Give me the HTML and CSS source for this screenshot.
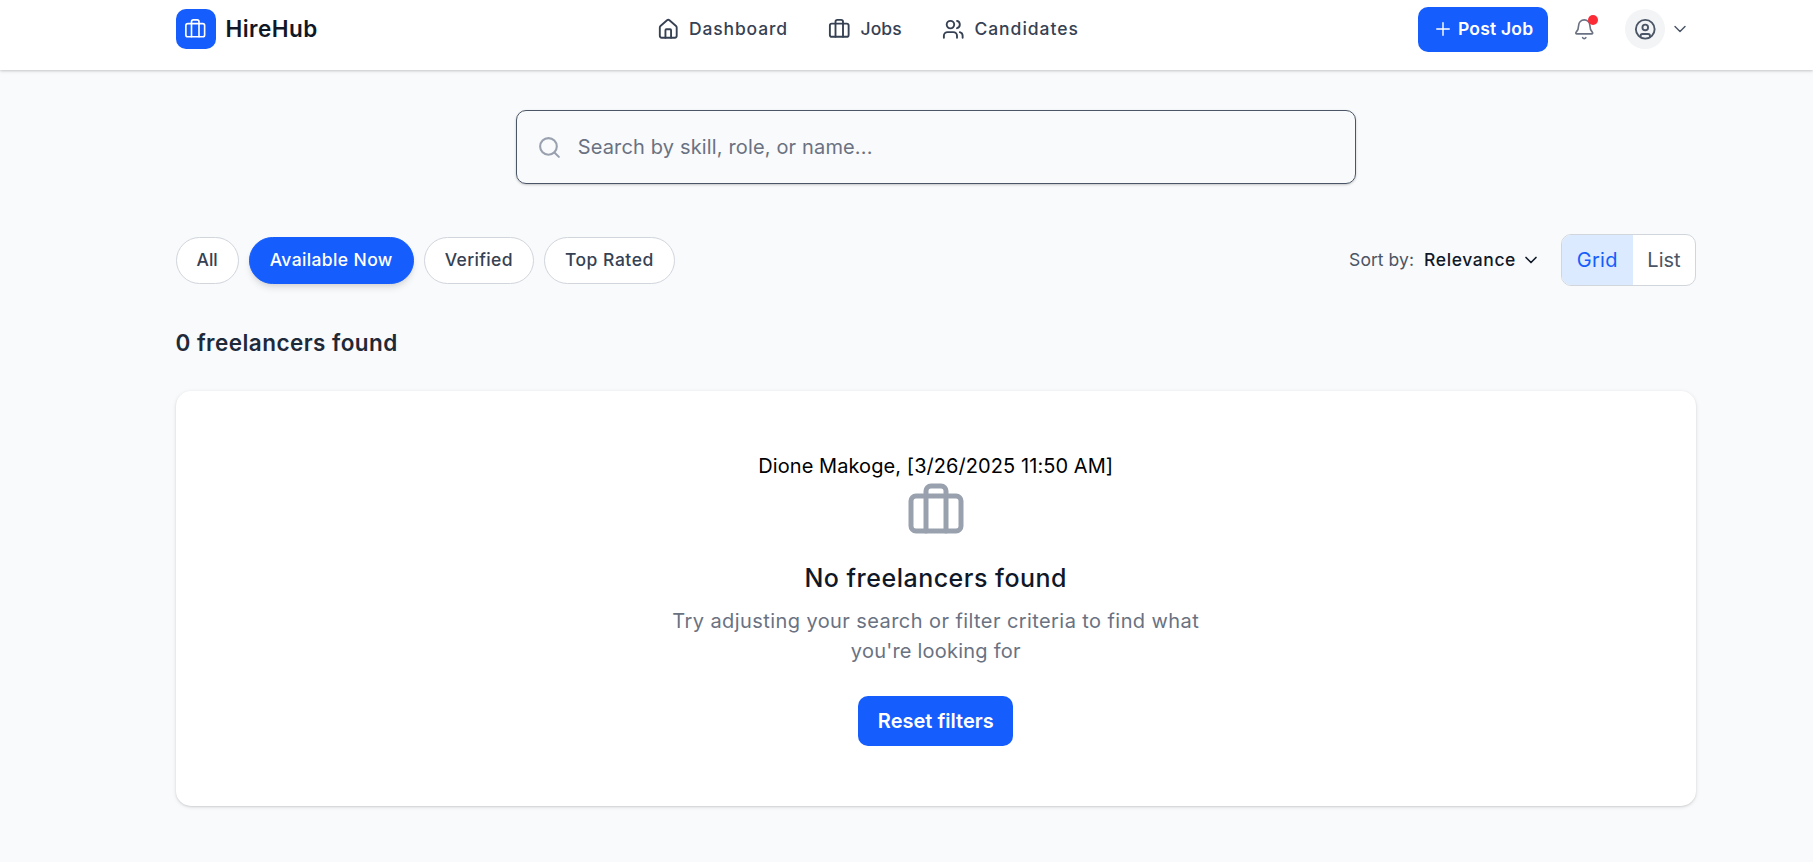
FILE: index.html
```
<!DOCTYPE html>
<html lang="en"><head><meta charset="utf-8"><title>HireHub</title><link rel="stylesheet" href="styles.css"></head>
<body>
<svg width="0" height="0" class="defs"><symbol id="briefcase" viewBox="0 0 24 24"><path d="M16 20V4a2 2 0 0 0-2-2h-4a2 2 0 0 0-2 2v16"/><rect x="2" y="6" width="20" height="14" rx="2"/></symbol><symbol id="chevron" viewBox="0 0 24 24"><path d="m6 9 6 6 6-6"/></symbol></svg>
<header class="header"><div class="bar">
<div class="brand"><span class="logo"><svg class="icon"><use href="#briefcase"/></svg></span><span class="brand-name t">HireHub</span></div>
<nav class="nav">
<a class="nav-item"><svg class="icon" viewBox="0 0 24 24"><path d="M15 21v-8a1 1 0 0 0-1-1h-4a1 1 0 0 0-1 1v8"/><path d="M3 10a2 2 0 0 1 .709-1.528l7-5.999a2 2 0 0 1 2.582 0l7 5.999A2 2 0 0 1 21 10v9a2 2 0 0 1-2 2H5a2 2 0 0 1-2-2z"/></svg><span class="t w-dashboard">Dashboard</span></a>
<a class="nav-item"><svg class="icon"><use href="#briefcase"/></svg><span class="t w-jobs">Jobs</span></a>
<a class="nav-item"><svg class="icon" viewBox="0 0 24 24"><path d="M16 21v-2a4 4 0 0 0-4-4H6a4 4 0 0 0-4 4v2"/><circle cx="9" cy="7" r="4"/><path d="M22 21v-2a4 4 0 0 0-3-3.87M16 3.13a4 4 0 0 1 0 7.75"/></svg><span class="t w-candidates">Candidates</span></a>
</nav>
<div class="actions">
<button class="post"><svg class="icon small thin" viewBox="0 0 24 24"><path d="M4.5 12h15M12 4.5v15"/></svg><span class="t w-post">Post Job</span></button>
<span class="bell"><svg class="icon" viewBox="0 0 24 24"><path d="M10.268 21a2 2 0 0 0 3.464 0"/><path d="M3.262 15.326A1 1 0 0 0 4 17h16a1 1 0 0 0 .74-1.673C19.41 13.956 18 12.499 18 8A6 6 0 0 0 6 8c0 4.499-1.411 5.956-2.738 7.326"/></svg><i class="dot"></i></span>
<span class="avatar"><svg class="icon" viewBox="0 0 24 24"><circle cx="12" cy="12" r="10"/><circle cx="12" cy="10" r="3"/><path d="M7 20.662V19a2 2 0 0 1 2-2h6a2 2 0 0 1 2 2v1.662"/></svg></span>
<svg class="icon small thin menu-chevron"><use href="#chevron"/></svg>
</div></div></header>
<main class="main">
<div class="search"><svg class="icon search-icon" viewBox="0 0 24 24"><circle cx="11" cy="11" r="8"/><path d="m21 21-4.3-4.3"/></svg><span class="t w-search">Search by skill, role, or name...</span></div>
<div class="toolbar">
<div class="filters"><button class="pill"><span class="t w-all">All</span></button><button class="pill active"><span class="t w-available">Available Now</span></button><button class="pill"><span class="t w-verified">Verified</span></button><button class="pill"><span class="t w-top">Top Rated</span></button></div>
<div class="view"><span class="sort-label t">Sort by:</span><span class="sort-value t">Relevance</span><svg class="icon small sort-chevron"><use href="#chevron"/></svg>
<div class="toggle"><span class="seg on"><span class="t w-grid">Grid</span></span><span class="seg"><span class="t w-list">List</span></span></div></div>
</div>
<h2 class="count"><span class="t w-count">0 freelancers found</span></h2>
<section class="card"><div class="note"><span class="t w-note">Dione Makoge, [3/26/2025 11:50 AM]</span></div><svg class="icon big"><use href="#briefcase"/></svg><h3 class="empty-title"><span class="t w-title">No freelancers found</span></h3><p class="empty-text"><span class="t w-line1">Try adjusting your search or filter criteria to find what</span><br><span class="t w-line2">you're looking for</span></p><button class="reset"><span class="t w-reset">Reset filters</span></button></section>
</main>
</body></html>
```
FILE: styles.css
```
* { box-sizing: border-box; }
body { margin: 0; width: 1813px; height: 862px; overflow: hidden; background: #f9fafb; color: #000; font-family: Inter, "Open Sans", sans-serif; font-size: 20px; line-height: 30px; }
h2, h3, p { margin: 0; }
button { border: 0; padding: 0; font: inherit; }
.defs { position: absolute; }
.t { display: inline-block; white-space: nowrap; }
.icon { width: 22.5px; height: 22.5px; flex: none; fill: none; stroke: currentColor; stroke-width: 2; stroke-linecap: round; stroke-linejoin: round; }
.small { width: 20px; height: 20px; }
.thin { stroke-width: 1.7; }
.header { height: 70px; background: #fff; box-shadow: 0 1px 4px rgba(0,0,0,.13), 0 1px 2px rgba(0,0,0,.1); }
.bar { height: 58px; width: 1520.5px; margin-left: 175.5px; display: flex; align-items: center; justify-content: space-between; }
.brand { display: flex; align-items: center; gap: 10px; width: 481px; }
.logo { width: 40px; height: 40px; border-radius: 10px; background: #155dfc; color: #fff; display: grid; place-items: center; }
.logo .icon { stroke-width: 1.75; }
.brand-name { color: #101828; font-size: 22.5px; font-weight: 600; letter-spacing: .45px; }
.nav { display: flex; gap: 40px; flex: 1; color: #364153; font-size: 17.5px; font-weight: 500; }
.nav-item { display: flex; align-items: center; gap: 10px; }
.w-dashboard { letter-spacing: .85px; }
.w-jobs { letter-spacing: .15px; }
.w-candidates { letter-spacing: .97px; }
.actions { display: flex; align-items: center; color: #4a5565; }
.post { width: 130px; height: 45px; border-radius: 10px; background: #155dfc; color: #fff; font-size: 17.5px; font-weight: 600; display: flex; align-items: center; gap: 5px; padding-left: 15px; margin-right: 25px; }
.w-post { letter-spacing: .2px; }
.bell { position: relative; display: flex; color: #6a7282; margin-right: 29.5px; }
.bell .icon { stroke-width: 1.75; }
.dot { position: absolute; width: 10px; height: 10px; border-radius: 50%; background: #fb2c36; right: -2.5px; top: -2.5px; }
.avatar { width: 40px; height: 40px; border-radius: 50%; background: #f3f4f6; display: grid; place-items: center; margin-right: 5px; }
.menu-chevron { color: #4a5565; margin-right: 6px; }
.main { width: 1520.5px; margin-left: 175.5px; }
.search { width: 840px; height: 74px; margin: 40px auto 0; border: 1px solid #4a5565; border-radius: 10px; display: flex; align-items: center; gap: 16px; padding-left: 20px; color: #6a7282; box-shadow: 0 1px 3px rgba(0,0,0,.12), 0 1px 2px rgba(0,0,0,.1); }
.search-icon { width: 25px; height: 25px; color: #99a1af; }
.w-search { letter-spacing: .15px; }
.toolbar { height: 52px; margin-top: 50px; display: flex; align-items: center; justify-content: space-between; font-size: 17.5px; }
.filters { display: flex; gap: 10px; }
.pill { height: 47px; padding: 0 20px; border: 1px solid #d1d5dc; border-radius: 24px; background: #fff; color: #364153; font-weight: 500; }
.pill.active { border-color: #155dfc; background: #155dfc; color: #fff; box-shadow: 0 5px 7px -1px rgba(0,0,0,.1), 0 2px 5px -2px rgba(0,0,0,.1); }
.w-available { letter-spacing: .38px; }
.w-verified { letter-spacing: .35px; }
.w-top { letter-spacing: .53px; }
.view { display: flex; align-items: center; }
.sort-label { color: #4a5565; margin-right: 10px; letter-spacing: .06px; }
.sort-value { color: #101828; font-weight: 500; margin-right: 4.5px; letter-spacing: .6px; }
.sort-chevron { color: #101828; margin-right: 20px; }
.toggle { display: flex; width: 135.5px; height: 52px; border: 1px solid #d1d5dc; border-radius: 10px; overflow: hidden; background: #fff; font-size: 20px; }
.seg { flex: 1; display: grid; place-items: center; color: #4a5565; }
.seg.on { flex: 0 0 71.5px; background: #dbeafe; color: #155dfc; }
.w-grid { letter-spacing: .3px; }
.count { height: 35px; margin-top: 39px; line-height: 35px; font-size: 22.5px; font-weight: 600; color: #1e2939; }
.w-count { letter-spacing: .45px; }
.card { height: 415px; margin-top: 31px; padding-top: 60px; border-radius: 15px; background: #fff; text-align: center; box-shadow: 0 1px 4px rgba(0,0,0,.1), 0 1px 2px rgba(0,0,0,.1); }
.note { height: 30px; }
.w-note { letter-spacing: .07px; }
.big { display: block; width: 60px; height: 60px; margin: 0 auto 20px; color: #99a1af; }
.empty-title { font-size: 25px; line-height: 35px; font-weight: 500; color: #101828; }
.w-title { letter-spacing: .5px; }
.empty-text { margin-top: 10px; height: 60px; color: #6a7282; }
.w-line1 { letter-spacing: .42px; }
.w-line2 { letter-spacing: .22px; }
.reset { width: 155px; height: 50px; margin-top: 30px; border-radius: 10px; background: #155dfc; color: #fff; font-weight: 600; }
.w-reset { letter-spacing: 0; }
```
